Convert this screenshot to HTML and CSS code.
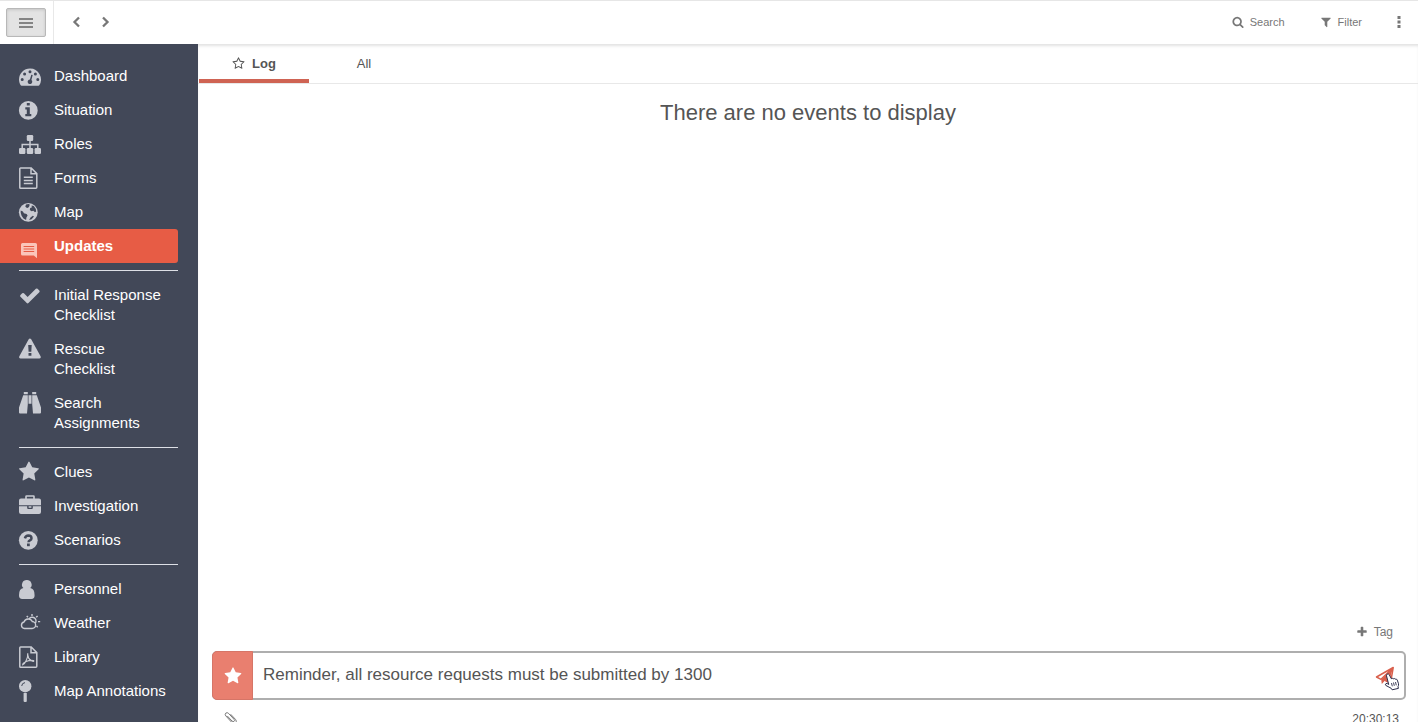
FILE: index.html
```html
<!DOCTYPE html>
<html lang="en">
<head>
<meta charset="utf-8">
<meta name="viewport" content="width=device-width, initial-scale=1">
<title>Updates</title>
<link rel="stylesheet" href="styles.css">
</head>
<body>
<div class="app">
  <header class="topbar">
    <div class="menu-cell">
      <button class="menu-button" type="button" aria-label="Menu">
        <svg width="14" height="10" viewBox="0 0 14 10"><path d="M0 1h14M0 5h14M0 9h14" stroke="#666" stroke-width="1.600"/></svg>
      </button>
    </div>
    <nav class="history" aria-label="History">
      <button class="plain" type="button" aria-label="Back"><svg width="9" height="12" viewBox="0 0 9 12"><path d="M7 1.500 2.500 6 7 10.500" fill="none" stroke="#777" stroke-width="2.300"/></svg></button>
      <button class="plain" type="button" aria-label="Forward"><svg width="9" height="12" viewBox="0 0 9 12"><path d="M2 1.500 6.500 6 2 10.500" fill="none" stroke="#777" stroke-width="2.300"/></svg></button>
    </nav>
    <div class="tools">
      <button class="plain tool" type="button"><svg width="12" height="12" viewBox="0 0 1792 1792"><path fill="currentColor" d="M1216 832q0-185-131.500-316.500t-316.500-131.500-316.500 131.500-131.500 316.500 131.500 316.500 316.500 131.500 316.500-131.500 131.500-316.500zm512 832q0 52-38 90t-90 38q-54 0-90-38l-343-342q-179 124-399 124-143 0-273.500-55.500t-225-150-150-225-55.500-273.500 55.500-273.500 150-225 225-150 273.500-55.500 273.500 55.500 225 150 150 225 55.500 273.500q0 220-124 399l343 343q37 37 37 90z"/></svg>Search</button>
      <button class="plain tool" type="button"><svg width="12" height="12" viewBox="0 0 1792 1792"><path fill="currentColor" d="M1595 295q17 41-14 70l-493 493v742q0 42-39 59-13 5-25 5-27 0-45-19l-256-256q-19-19-19-45v-486l-493-493q-31-29-14-70 17-39 59-39h1280q42 0 59 39z"/></svg>Filter</button>
      <button class="plain" type="button" aria-label="More"><svg width="4" height="12" viewBox="0 0 4 12"><path d="M.5 0h3v3h-3zM.5 4.500h3v3h-3zM.5 9h3v3h-3z" fill="#777"/></svg></button>
    </div>
  </header>

  <div class="body">
    <nav class="sidebar" aria-label="Main">
      <ul class="group">
        <li><a class="item" href="#"><svg class="icon" viewBox="0 0 24 24"><path fill="currentColor" fill-rule="evenodd" d="M11 4.500A11 11 0 0 0 0 15.500C0 17.700.6 19.700 1.700 21.300Q2 21.700 2.500 21.700H19.500Q20 21.700 20.300 21.300A11 11 0 0 0 11 4.500ZM3.200 14a1.500 1.500 0 1 0 0 3 1.500 1.500 0 0 0 0-3ZM5.600 8.600a1.500 1.500 0 1 0 0 3 1.500 1.500 0 0 0 0-3ZM11 6.200a1.500 1.500 0 1 0 0 3 1.500 1.500 0 0 0 0-3ZM16.400 8.600a1.500 1.500 0 1 0 0 3 1.500 1.500 0 0 0 0-3ZM18.800 14a1.500 1.500 0 1 0 0 3 1.500 1.500 0 0 0 0-3ZM12.300 10.700 10.900 15.500A2.300 2.300 0 1 0 12.400 16L13.700 11.100Z"/></svg><span>Dashboard</span></a></li>
        <li><a class="item" href="#"><svg class="icon" viewBox="0 0 24 24"><path fill="currentColor" fill-rule="evenodd" d="M9.300 3a9.400 9.400 0 1 0 0 18.800 9.400 9.400 0 0 0 0-18.800ZM7.800 4.900h3v2.700h-3ZM6.300 9.300h4.500v6.600h1.500v2.300H6.300v-2.300h1.500v-4.300H6.300Z"/></svg><span>Situation</span></a></li>
        <li><a class="item" href="#"><svg class="icon" viewBox="0 0 24 24"><g fill="currentColor"><rect x="7.800" y="3" width="6.400" height="6" rx="1.200"/><rect x="0" y="16" width="6.400" height="6" rx="1.200"/><rect x="7.800" y="16" width="6.400" height="6" rx="1.200"/><rect x="15.600" y="16" width="6.400" height="6" rx="1.200"/></g><path d="M11 8v9M3.200 17v-4.500h15.600V17" fill="none" stroke="currentColor" stroke-width="1.500"/></svg><span>Roles</span></a></li>
        <li><a class="item" href="#"><svg class="icon" viewBox="0 0 24 24"><path d="M1.600 2h10.600l5.600 5.600v13.600q0 1-1 1H1.600q-.8 0-.8-.8V2.800q0-.8.800-.8ZM12 2v5.800h5.800M4.800 11.200h9M4.800 14.400h9M4.800 17.600h9" fill="none" stroke="currentColor" stroke-width="1.500"/></svg><span>Forms</span></a></li>
        <li><a class="item" href="#"><svg class="icon" viewBox="0 0 24 24"><circle cx="9.300" cy="12.300" r="9.400" fill="currentColor"/><path class="cut" d="M7 4.600 9.600 4l1.500.9-1.300 1 .6.9-2 1.300-1.200-.6-.9-1.100ZM12.600 5.500l2.200.6 2 2.800.4 2.700-1.300.7-1.500-1.600-1.800.5-1.800-1.200.4-1.900 1.600-.5ZM1.700 10.500l2.200 1 1 1.700 2.700.8 1 1.600-1.200 1.900-.3 2.600-2.600-1.600-1.900-2.700-.9-3ZM11.500 17.600l2.300-1.800 1.200.7-2.400 2.800-2.500.8Z"/></svg><span>Map</span></a></li>
        <li><a class="item active" href="#" aria-current="page"><svg class="icon" viewBox="0 0 24 24"><path fill="currentColor" d="M3.500 9h13Q18 9 18 10.500v13.800L14.800 21.500H3.500Q2 21.500 2 20v-9.500Q2 9 3.500 9Z"/><path class="lines" d="M4.600 12.500h10.600M4.600 15h10.600M4.600 17.500h10.600"/></svg><span>Updates</span></a></li>
      </ul>
      <ul class="group">
        <li><a class="item" href="#"><svg class="icon" viewBox="0 0 24 24"><path transform="translate(-.4 1.200) scale(.0126)" fill="currentColor" d="M1671 566q0 40-28 68l-724 724-136 136q-28 28-68 28t-68-28l-136-136-362-362q-28-28-28-68t28-68l136-136q28-28 68-28t68 28l294 295 656-657q28-28 68-28t68 28l136 136q28 28 28 68z"/></svg><span>Initial Response Checklist</span></a></li>
        <li><a class="item" href="#"><svg class="icon" viewBox="0 0 24 24"><path fill="currentColor" fill-rule="evenodd" d="M9.700 2.300q1.200-1.500 2.500 0L21.700 19.500q.6 1.900-1.300 2.100H1.500q-1.900-.2-1.300-2.100ZM9.200 8l.4 6.700h2.700l.4-6.700ZM9.500 16v2.700h2.900V16Z"/></svg><span>Rescue<br>Checklist</span></a></li>
        <li><a class="item" href="#"><svg class="icon" viewBox="0 0 24 24"><path fill="currentColor" d="M4.800 1h4v2.300h-4ZM13.200 1h4v2.300h-4ZM4.200 4.200h4.600v9L8 22.600H1q-1 0-1-1v-5.200ZM13.200 4.200h4.600L22 16.400v5.200q0 1-1 1h-7l-.8-9.400ZM9.500 4.200h3v8.600h-3Z"/></svg><span>Search<br>Assignments</span></a></li>
      </ul>
      <ul class="group">
        <li><a class="item" href="#"><svg class="icon" viewBox="0 0 24 24"><path transform="translate(-.8 1) scale(.0120)" fill="currentColor" d="M1728 647q0 22-26 48l-363 354 86 500q1 7 1 20 0 21-10.500 35.500t-30.500 14.500q-19 0-40-12l-449-236-449 236q-22 12-40 12-21 0-31.500-14.500t-10.500-35.500q0-6 2-20l86-500-364-354q-25-27-25-48 0-37 56-46l502-73 225-455q19-41 49-41t49 41l225 455 502 73q56 9 56 46z"/></svg><span>Clues</span></a></li>
        <li><a class="item" href="#"><svg class="icon" viewBox="0 0 24 24"><path fill="currentColor" fill-rule="evenodd" d="M7.500 1.200h7q1.300 0 1.300 1.300v2H20q2 0 2 2v4.700H0V6.500q0-2 2-2h4.200v-2q0-1.300 1.300-1.300ZM7.800 2.800v1.700h6.400V2.800ZM0 12.200h8.200v1.800q0 1 1 1h3.600q1 0 1-1v-1.800H22V18q0 2-2 2H2q-2 0-2-2ZM9.600 12.200h2.800v1.500H9.600Z"/></svg><span>Investigation</span></a></li>
        <li><a class="item" href="#"><svg class="icon" viewBox="0 0 24 24"><circle cx="9.300" cy="12.300" r="9.400" fill="currentColor"/><path class="mark" d="M5.900 10.300Q6.700 7.600 9.300 7.600q3.200.1 3.200 2.600 0 1.400-1.600 2.200-1.400.7-1.400 1.900"/><path class="cut" d="M8 15.500h2.800v2.700H8Z"/></svg><span>Scenarios</span></a></li>
      </ul>
      <ul class="group">
        <li><a class="item" href="#"><svg class="icon" viewBox="0 0 24 24"><path fill="currentColor" d="M7.800 3a4.700 4.700 0 0 1 3.400 8.100q4.400.5 4.400 7.100 0 3.800-3.200 3.800H3.200Q0 22 0 18.200q0-6.600 4.400-7.100A4.700 4.700 0 0 1 7.800 3Z"/></svg><span>Personnel</span></a></li>
        <li><a class="item" href="#"><svg class="icon" viewBox="0 0 24 24"><path d="M5.500 17.500a3.300 3.300 0 0 1-.5-6.500 4.500 4.500 0 0 1 8.300-.5 3.500 3.500 0 0 1-.3 7ZM10.200 7.700a3.800 3.800 0 1 1 5.700 5M13 3v2M7.700 4.900l1.300 1.400M18.600 4.900l-1.400 1.400M19 10.600h2.200M17.500 15l1.200 1.200" fill="none" stroke="currentColor" stroke-width="1.400"/></svg><span>Weather</span></a></li>
        <li><a class="item" href="#"><svg class="icon" viewBox="0 0 24 24"><path d="M1.600 2h10.600l5.600 5.600v13.600q0 1-1 1H1.600q-.8 0-.8-.8V2.800q0-.8.800-.8ZM12 2v5.800h5.800" fill="none" stroke="currentColor" stroke-width="1.500"/><path d="M8.700 8.200q.4 3.700-1.500 7.300-1.700 3.700-3.500 4.300 0-1.700 3.500-3.300 3.600-1.500 7.300-.9.700.3-.3.800-2.800-.3-4.500-3.300-1.300-2.500-1-4.900Z" fill="none" stroke="currentColor" stroke-width="1.200"/></svg><span>Library</span></a></li>
        <li><a class="item" href="#"><svg class="icon" viewBox="0 0 24 24"><circle cx="6.200" cy="7.200" r="6.200" fill="currentColor"/><path fill="currentColor" d="M4.600 14h3.200v8q0 1-1 1H5.600q-1 0-1-1Z"/><path class="glint" d="M2.700 7q.2-3 3.300-3.400"/></svg><span>Map Annotations</span></a></li>
      </ul>
    </nav>

    <main class="main">
      <div class="tabs" role="tablist">
        <button class="tab selected" type="button" role="tab" aria-selected="true"><svg width="13" height="13" viewBox="0 0 1792 1792"><path fill="currentColor" d="M1201 1004l306-297-422-62-189-382-189 382-422 62 306 297-73 421 378-199 377 199zm527-357q0 22-26 48l-363 354 86 500q1 7 1 20 0 50-41 50-19 0-40-12l-449-236-449 236q-22 12-40 12-21 0-31.500-14.500t-10.500-35.500q0-6 2-20l86-500-364-354q-25-27-25-48 0-37 56-46l502-73 225-455q19-41 49-41t49 41l225 455 502 73q56 9 56 46z"/></svg>Log</button>
        <button class="tab" type="button" role="tab" aria-selected="false">All</button>
      </div>
      <section class="events"><h1>There are no events to display</h1></section>
      <form class="composer">
        <div class="tag-row">
          <button class="plain tag" type="button"><svg width="12" height="12" viewBox="0 0 1792 1792"><path fill="currentColor" d="M1600 736v192q0 40-28 68t-68 28h-416v416q0 40-28 68t-68 28h-192q-40 0-68-28t-28-68v-416h-416q-40 0-68-28t-28-68v-192q0-40 28-68t68-28h416v-416q0-40 28-68t68-28h192q40 0 68 28t28 68v416h416q40 0 68 28t28 68z"/></svg>Tag</button>
        </div>
        <div class="field">
          <button class="star" type="button" aria-label="Mark as log entry"><svg width="18" height="18" viewBox="0 0 1792 1792"><path fill="#fff" d="M1728 647q0 22-26 48l-363 354 86 500q1 7 1 20 0 21-10.500 35.500t-30.500 14.500q-19 0-40-12l-449-236-449 236q-22 12-40 12-21 0-31.500-14.500t-10.500-35.500q0-6 2-20l86-500-364-354q-25-27-25-48 0-37 56-46l502-73 225-455q19-41 49-41t49 41l225 455 502 73q56 9 56 46z"/></svg></button>
          <input class="message" type="text" aria-label="Message" value="Reminder, all resource requests must be submitted by 1300">
          <button class="send" type="submit" aria-label="Send">
            <svg width="20" height="20" viewBox="0 0 20 20"><path d="M18.200 1.500 1.500 11l4.500 2.300L18.200 1.500 15.500 17l-5-2.200" fill="none" stroke="#d9604d" stroke-width="1.500" stroke-linejoin="round"/><path d="M18.200 1.500 6.200 13.500 6.800 18l3-3.200 4 1.200Z" fill="#d9604d"/></svg>
            <svg class="pointer" width="16" height="18" viewBox="0 0 16 18"><path d="M3 1.200q1.400-.9 2.300.6l2 3.900q1-.9 1.900.1 1.200-.8 2 .3 1.400-.5 2.100 1l1.200 3.600q.3 1.700-.5 3l.4 1.700-6.300 1.400-.9-1.500-5.400-2.900q-.9-1.500.2-1.900 1.300-.3 2.700 1L2.500 2.800q-.3-1 .5-1.600Z" fill="#fff" stroke="#2b2d4a"/><path d="m7.500 10 .8 3.300M9.500 9.500l.8 3.300M11.500 9l.8 3.300" stroke="#2b2d4a" stroke-width=".9"/></svg>
          </button>
        </div>
        <div class="meta">
          <button class="plain" type="button" aria-label="Attach a file"><svg width="14" height="14" viewBox="0 0 14 14"><path d="m3.300 5 4.700 5q1.200 1.100 2.100.3.900-.9-.1-2L4.700 2.500Q3.200 1 1.800 2.100.5 3.300 1.900 5l5.900 6.400q1.900 1.900 3.700.5 1.700-1.600 0-3.500L6.600 3.200" fill="none" stroke="#777"/></svg></button>
          <time>20:30:13</time>
        </div>
      </form>
    </main>
  </div>
</div>
</body>
</html>
```
FILE: styles.css
```css
* { box-sizing: border-box; }
body {
  margin: 0;
  font-family: "Liberation Sans", Arial, sans-serif;
  color: #555;
  background: #fff;
}
button, input { font: inherit; color: inherit; }
button { cursor: pointer; }
svg { display: block; flex: none; }

.app { display: flex; flex-direction: column; height: 100vh; overflow: hidden; }

.topbar {
  display: flex;
  flex: none;
  height: 44px;
  border-top: 1px solid #e6e6e6;
  background: #fff;
}
.menu-cell { padding: 7px 7px 0 6px; border-right: 1px solid #e8e8e8; }
.menu-button {
  display: flex;
  align-items: center;
  justify-content: center;
  width: 40px;
  height: 29px;
  padding: 0;
  border: 1px solid #b8b8b8;
  border-radius: 2px;
  background: #e3e3e3;
  box-shadow: inset 0 1px 3px #c4c4c4;
}
.plain { display: flex; align-items: center; padding: 0; border: 0; background: none; }
.history { display: flex; gap: 20px; padding: 0 0 2px 18px; }
.tools {
  display: flex;
  margin-left: auto;
  padding: 0 17px 2px 0;
  font-size: 11px;
  color: #777;
}
.tool { gap: 6px; margin-right: 35px; }

.body { display: flex; flex: 1; min-height: 0; }

.sidebar {
  flex: none;
  width: 198px;
  padding-top: 15px;
  overflow: hidden;
  background: #424858;
  color: #fff;
}
.group { margin: 0; padding: 0; list-style: none; }
.group + .group::before {
  content: "";
  display: block;
  height: 1px;
  margin: 7px 20px 7px 19px;
  background: #dde0e6;
}
.item {
  display: flex;
  gap: 11px;
  margin-right: 20px;
  padding: 7px 0 7px 19px;
  font-size: 15px;
  line-height: 20px;
  color: #fff;
  text-decoration: none;
}
.item.active { border-radius: 0 3px 3px 0; background: #e75c45; font-weight: bold; }
.icon { width: 24px; height: 24px; margin: -2px 0; color: #c9cbd2; overflow: visible; }
.active .icon { color: #fbc5ba; }
.cut { fill: #424858; }
.mark { fill: none; stroke: #424858; stroke-width: 2.5; }
.glint { fill: none; stroke: #424858; stroke-width: 1; }
.lines { fill: none; stroke: #e75c45; stroke-width: 1; }

.main {
  display: flex;
  flex: 1;
  flex-direction: column;
  min-width: 0;
  box-shadow: inset 0 3px 3px -1px #e2e2e2;
}
.tabs { display: flex; flex: none; height: 40px; padding-left: 1px; border-bottom: 1px solid #e8e8e8; }
.tab {
  display: flex;
  align-items: center;
  justify-content: center;
  gap: 7px;
  width: 110px;
  height: 39px;
  padding: 4px 0 4px;
  border: 0;
  background: none;
  font-size: 13px;
}
.tab.selected { padding-bottom: 0; border-bottom: 4px solid #cf6353; font-weight: bold; }
.events { flex: 1; min-height: 0; text-align: center; }
h1 { margin: 0; padding-top: 16px; font-size: 22px; line-height: 26px; font-weight: normal; }

.composer { flex: none; padding: 0 12px 0 14px; }
.tag-row { display: flex; justify-content: flex-end; padding: 0 13px 11px 0; }
.tag { gap: 6px; height: 16px; font-size: 12px; color: #777; }
.field {
  display: flex;
  height: 49px;
  border: 2px solid #aeaeae;
  border-radius: 5px;
}
.star {
  display: flex;
  align-items: center;
  justify-content: center;
  width: 41px;
  margin: -2px 0 -2px -2px;
  padding: 0;
  border: 1px solid #d67567;
  border-radius: 5px 0 0 5px;
  background: #e97f6f;
}
.message {
  flex: 1;
  min-width: 0;
  padding: 0 10px 2px;
  border: 0;
  outline: 0;
  background: none;
  font-size: 17px;
}
.send { position: relative; width: 38px; padding: 0 9px; border: 0; background: none; }
.pointer { position: absolute; left: 18px; top: 20px; }
.meta {
  display: flex;
  justify-content: space-between;
  height: 22px;
  padding: 9px 7px 0 12px;
  font-size: 12px;
  line-height: 20px;
}
.meta .plain { height: 18px; }
```
